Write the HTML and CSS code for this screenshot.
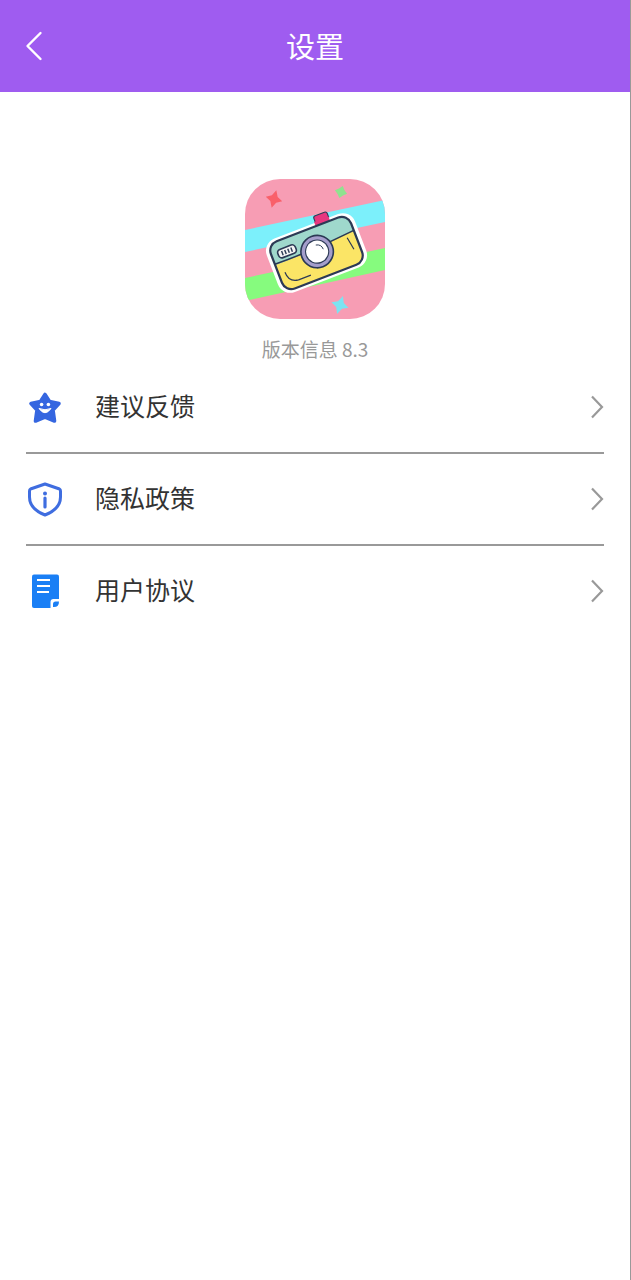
FILE: index.html
```html
<!DOCTYPE html>
<html lang="zh-CN">
<head>
    <meta charset="UTF-8">
    <meta name="viewport" content="width=device-width, initial-scale=1.0">
    <title>设置</title>
    <link rel="stylesheet" href="styles.css">
</head>
<body>
    <div class="page">
        <header class="topbar">
            <div class="back">
                <svg width="18" height="32" viewBox="0 0 18 32"><path d="M15.500 3 L2.500 16 L15.500 29" fill="none" stroke="#fff" stroke-width="2.400" stroke-linecap="round" stroke-linejoin="round"/></svg>
            </div>
            <h1 class="title">设置</h1>
        </header>

        <div class="about">
            <svg class="logo" width="140" height="140" viewBox="0 0 140 140">
                <defs>
                    <clipPath id="logoClip"><rect width="140" height="140" rx="35"/></clipPath>
                    <clipPath id="bodyClip"><rect x="-39" y="-23" width="78" height="46" rx="9"/></clipPath>
                </defs>
                <g clip-path="url(#logoClip)">
                    <rect width="140" height="140" fill="#f79db4"/>
                    <path d="M0 51 L140 21 L140 43 L0 73 Z" fill="#7cf0fb"/>
                    <path d="M0 99 L140 69 L140 91 L0 122 Z" fill="#86fb7e"/>
                    <path transform="translate(29 20) rotate(15)" d="M0 -9 L3 -3 L8.500 0 L3 3 L0 9 L-3 3 L-8.500 0 L-3 -3 Z" fill="#f9606a"/>
                    <path transform="translate(96 13) rotate(15) scale(0.7)" d="M0 -9 L4 -4 L9 0 L4 4 L0 9 L-4 4 L-9 0 L-4 -4 Z" fill="#8fe28f"/>
                    <path transform="translate(95 126) rotate(18)" d="M0 -9.500 L3 -3 L9 0 L3 3 L0 9.500 L-3 3 L-9 0 L-3 -3 Z" fill="#7ce3f2"/>
                    <g transform="translate(71.500 74) rotate(-21) scale(1.1)">
                        <rect x="9" y="-32" width="13" height="9" rx="2" fill="#e8377f" stroke="#2c3a55" stroke-width="1"/>
                        <rect x="-43" y="-26" width="86" height="52" rx="12" fill="#fff"/>
                        <rect x="8" y="-27" width="14" height="4" fill="#e8377f"/>
                        <g clip-path="url(#bodyClip)">
                            <rect x="-39" y="-23" width="78" height="46" fill="#fbe566"/>
                            <path d="M-39 -23 H39 V-7 Q0 -3 -39 -3 Z" fill="#9fd8cc"/>
                        </g>
                        <rect x="-39" y="-23" width="78" height="46" rx="9" fill="none" stroke="#2c3a55" stroke-width="2"/>
                        <path d="M-39 -4 Q0 -3 39 -7" fill="none" stroke="#2c3a55" stroke-width="1.400"/>
                        <rect x="-33" y="-15" width="17" height="8" rx="3" fill="#f4f4f4" stroke="#2c3a55" stroke-width="1.500"/>
                        <path d="M-29 -13 V-9 M-26 -13 V-9 M-23 -13 V-9 M-20 -13 V-9" stroke="#2c3a55" stroke-width="1.300"/>
                        <path d="M-33 6 Q-33 16 -24 17 M-24 17 H-12 M31 -3 L33 9" fill="none" stroke="#2c3a55" stroke-width="1.100"/>
                        <circle cx="1" cy="-1" r="15.500" fill="#2c3a55"/>
                        <circle cx="1" cy="-1" r="14" fill="#a49ecb"/>
                        <circle cx="1" cy="-1" r="11" fill="#2c3a55"/>
                        <circle cx="1" cy="-1" r="10" fill="#fff"/>
                        <path d="M2 -7 Q7 -6 7 -1" fill="none" stroke="#2c3a55" stroke-width="0.800"/>
                    </g>
                </g>
            </svg>
            <p class="version">版本信息 8.3</p>
        </div>

        <ul class="menu">
            <li class="menu-item">
                <svg class="menu-icon" width="36" height="36" viewBox="0 0 36 36">
                    <path d="M18 5.500 L22.500 12.500 L32 14.500 L26 21 L27.500 32 L18 28 L8.500 32 L10 21 L4 14.500 L13.500 12.500 Z" fill="#3566e0" stroke="#3566e0" stroke-width="3.600" stroke-linejoin="round"/>
                    <circle cx="14.600" cy="15.500" r="1.800" fill="#fff"/>
                    <circle cx="21.400" cy="15.500" r="1.800" fill="#fff"/>
                    <path d="M12 19.500 Q18 28 24 19.500 Q18 22 12 19.500 Z" fill="#fff" stroke="#fff" stroke-width="1" stroke-linejoin="round"/>
                </svg>
                <span class="menu-label">建议反馈</span>
                <svg class="chevron" width="14" height="24" viewBox="0 0 14 24"><path d="M2 1.500 L12 12 L2 22.500" fill="none" stroke="#999" stroke-width="2.200"/></svg>
            </li>
            <li class="menu-item">
                <svg class="menu-icon" width="36" height="36" viewBox="0 0 36 36">
                    <path d="M18 3 L32.500 8 Q33.500 8.500 33.500 10 V16 Q33.500 28 18 34 Q2.500 28 2.500 16 V10 Q2.500 8.500 3.500 8 Z" fill="none" stroke="#3f6de0" stroke-width="3" stroke-linejoin="round"/>
                    <circle cx="18" cy="12.500" r="2" fill="#3f6de0"/>
                    <path d="M18 17 V26" stroke="#3f6de0" stroke-width="3.200" stroke-linecap="round"/>
                </svg>
                <span class="menu-label">隐私政策</span>
                <svg class="chevron" width="14" height="24" viewBox="0 0 14 24"><path d="M2 1.500 L12 12 L2 22.500" fill="none" stroke="#999" stroke-width="2.200"/></svg>
            </li>
            <li class="menu-item">
                <svg class="menu-icon" width="36" height="36" viewBox="0 0 36 36">
                    <rect x="5" y="1.500" width="27" height="33.500" rx="2" fill="#1a7ff5"/>
                    <path d="M10 7 H23 M10 13 H23 M10 19 H22" stroke="#fff" stroke-width="2"/>
                    <path d="M23.500 35 V29 Q23.500 26 26.500 26 H32 V35 Z" fill="#fff"/>
                    <path d="M26 34 V31 Q26 28.500 28.500 28.500 H32 Q32 34 27 34 Z" fill="#1a7ff5"/>
                </svg>
                <span class="menu-label">用户协议</span>
                <svg class="chevron" width="14" height="24" viewBox="0 0 14 24"><path d="M2 1.500 L12 12 L2 22.500" fill="none" stroke="#999" stroke-width="2.200"/></svg>
            </li>
        </ul>
    </div>
</body>
</html>
```

FILE: styles.css
```css
* {
    box-sizing: border-box;
}
body {
    margin: 0;
    background-color: #fff;
    font-family: "Noto Sans CJK SC", "Noto Sans", sans-serif;
}
.page {
    min-height: 1280px;
    border-right: 1px solid #999;
}
.topbar {
    display: grid;
    grid-template-columns: 1fr auto 1fr;
    align-items: center;
    height: 92px;
    background-color: #9f5cf0;
}
.back {
    display: flex;
    padding-left: 25px;
}
.title {
    margin: 0 0 1px;
    color: #fff;
    font-size: 29px;
    font-weight: 400;
    line-height: 1;
}
.about {
    display: flex;
    flex-direction: column;
    align-items: center;
    padding-top: 87px;
}
.version {
    margin: 19px 0 0;
    height: 24px;
    color: #999;
    font-size: 19px;
    line-height: 22px;
}
.menu {
    margin: 0 26px;
    padding: 0;
    list-style: none;
}
.menu-item {
    display: flex;
    align-items: center;
    height: 92px;
    border-bottom: 2px solid #999;
}
.menu-item:last-child {
    border-bottom-color: transparent;
}
.menu-icon {
    margin-left: 1px;
    margin-right: 32px;
}
.menu-label {
    flex: 1;
    margin-bottom: 4px;
    color: #333;
    font-size: 25px;
    line-height: 1;
}
```
